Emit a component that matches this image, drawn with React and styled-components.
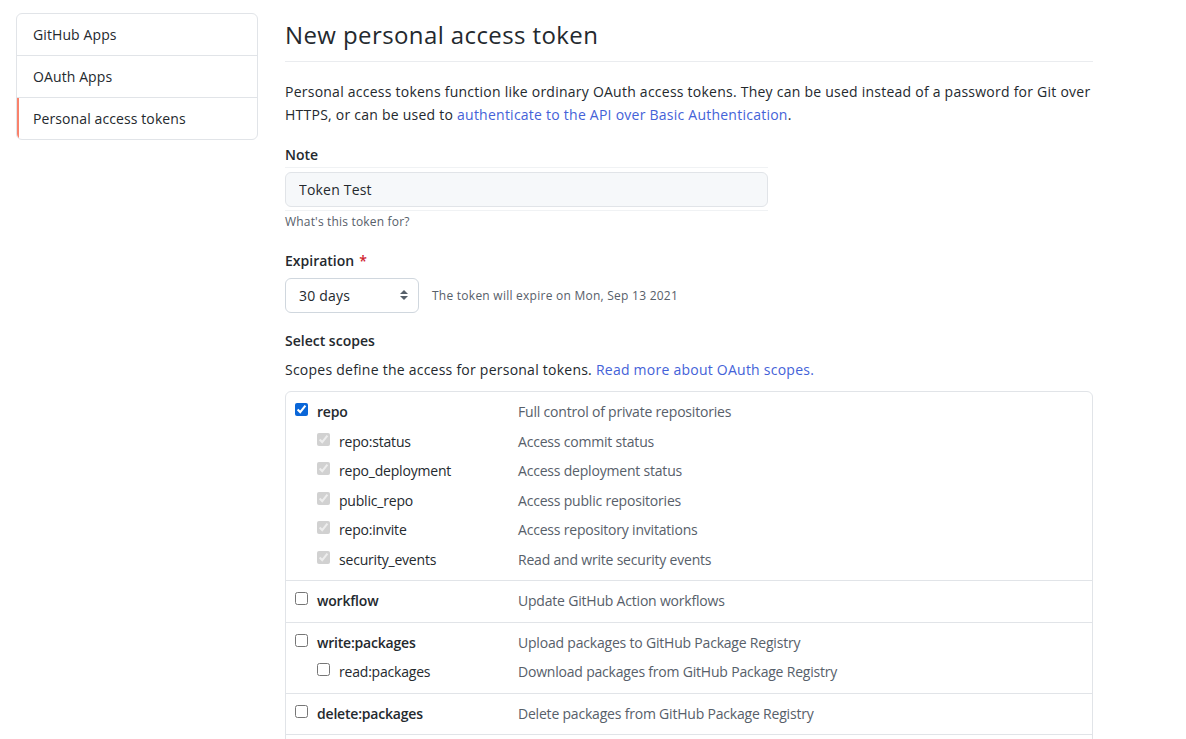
import React from "react";
import styled, { createGlobalStyle } from "styled-components";

const GlobalStyle = createGlobalStyle`
  body {
    margin: 0;
    background: #ffffff;
    color: #24292e;
    font-family: "Open Sans", "Noto Sans", "Liberation Sans", sans-serif;
    font-size: 14px;
  }
`;

const Layout = styled.div`
  display: flex;
  align-items: flex-start;
  gap: 27px;
  padding: 13px 0 0 16px;
`;

// Left settings menu
const SideMenu = styled.nav`
  width: 240px;
  border: 1px solid #e1e4e8;
  border-radius: 6px;
  overflow: hidden;
`;

const MenuItem = styled.a`
  display: block;
  padding: 0 16px;
  height: 41px;
  line-height: 41px;
  color: #24292e;
  text-decoration: none;
  font-size: 14px;
  letter-spacing: 0.1px;
  border-top: ${(p) => (p.$first ? "none" : "1px solid #e1e4e8")};
  box-shadow: ${(p) => (p.$active ? "inset 2px 0 0 #f9826c" : "none")};
`;

const Main = styled.main`
  width: 808px;
`;

const Title = styled.h2`
  margin: 0 0 18px;
  padding: 4px 0 8px;
  font-size: 24px;
  font-weight: 400;
  line-height: 36px;
  letter-spacing: 0.4px;
  border-bottom: 1px solid #eaecef;
`;

const Lead = styled.p`
  margin: 0 0 18px;
  line-height: 23px;
  letter-spacing: 0.24px;
`;

const Link = styled.a`
  color: #4462d8;
  text-decoration: none;
`;

const FormGroup = styled.div`
  margin-bottom: ${(p) => p.$mb || "15px"};
`;

const Label = styled.label`
  display: block;
  font-weight: 600;
  line-height: 22px;
  margin-bottom: ${(p) => p.$mb || "6px"};
`;

const Required = styled.span`
  color: #cf222e;
  margin-left: 5px;
`;

const InputFrame = styled.div`
  width: 483px;
  border-top: 1px solid #f0f2f4;
  border-bottom: 1px solid #f0f2f4;
  padding: 4px 0 3px;
`;

const TextInput = styled.input`
  box-sizing: border-box;
  width: 483px;
  height: 35px;
  padding: 0 13px;
  font: inherit;
  font-size: 14px;
  letter-spacing: 0.2px;
  color: #24292e;
  background: #f6f8fa;
  border: 1px solid #e1e4e8;
  border-radius: 6px;
  outline: none;
`;

const Note = styled.p`
  margin: 2px 0 0;
  font-size: 12px;
  letter-spacing: 0.18px;
  color: #57606a;
`;

const InlineRow = styled.div`
  display: flex;
  align-items: center;
  gap: 13px;
`;

const SelectWrap = styled.div`
  position: relative;
  width: 134px;
`;

const Select = styled.select`
  appearance: none;
  box-sizing: border-box;
  width: 134px;
  height: 35px;
  padding: 0 13px;
  font: inherit;
  font-size: 14px;
  letter-spacing: 0.2px;
  color: #24292e;
  background: #ffffff;
  border: 1px solid #d0d7de;
  border-radius: 6px;
`;

const Caret = styled.svg`
  position: absolute;
  right: 9px;
  top: 10px;
  pointer-events: none;
`;

const Hint = styled.span`
  font-size: 12px;
  letter-spacing: 0.25px;
  color: #57606a;
`;

const ScopeDesc = styled.p`
  margin: 8px 0 12px;
  letter-spacing: 0.24px;
`;

const ScopeTable = styled.div`
  border: 1px solid #e1e4e8;
  border-radius: 6px;
`;

const ScopeGroup = styled.div`
  padding: 5px 8px 6px;
  border-top: ${(p) => (p.$first ? "none" : "1px solid #e1e4e8")};
`;

const ScopeRow = styled.div`
  display: flex;
  align-items: center;
  height: 29.5px;
  overflow: hidden;
  letter-spacing: -0.2px;
`;

const ScopeName = styled.label`
  display: flex;
  align-items: center;
  flex: none;
  width: ${(p) => (p.$child ? "202px" : "224px")};
  padding-left: ${(p) => (p.$child ? "22px" : "0")};
  font-weight: ${(p) => (p.$child ? 400 : 600)};
  color: #24292e;
`;

const Check = styled.input`
  width: 13px;
  height: 13px;
  margin: 0 9px 4px 1px;
  accent-color: #0a66d8;
`;

const ScopeText = styled.span`
  color: #57606a;
`;

const groups = [
  {
    name: "repo",
    desc: "Full control of private repositories",
    checked: true,
    children: [
      ["repo:status", "Access commit status"],
      ["repo_deployment", "Access deployment status"],
      ["public_repo", "Access public repositories"],
      ["repo:invite", "Access repository invitations"],
      ["security_events", "Read and write security events"],
    ],
  },
  { name: "workflow", desc: "Update GitHub Action workflows", children: [] },
  {
    name: "write:packages",
    desc: "Upload packages to GitHub Package Registry",
    children: [["read:packages", "Download packages from GitHub Package Registry"]],
  },
  { name: "delete:packages", desc: "Delete packages from GitHub Package Registry", children: [] },
  { name: "admin:org", desc: "Full control of orgs and teams, read and write org projects", children: [] },
];

const App = () => (
  <>
    <GlobalStyle />
    <Layout>
      <SideMenu>
        <MenuItem $first href="#">GitHub Apps</MenuItem>
        <MenuItem href="#">OAuth Apps</MenuItem>
        <MenuItem $active href="#">Personal access tokens</MenuItem>
      </SideMenu>

      <Main>
        <Title>New personal access token</Title>
        <Lead>
          Personal access tokens function like ordinary OAuth access tokens. They can be used
          instead of a password for Git over HTTPS, or can be used to{" "}
          <Link href="#">authenticate to the API over Basic Authentication</Link>.
        </Lead>

        <FormGroup $mb="20px">
          <Label $mb="1px">Note</Label>
          <InputFrame>
            <TextInput defaultValue="Token Test" />
          </InputFrame>
          <Note>What's this token for?</Note>
        </FormGroup>

        <FormGroup $mb="17px">
          <Label>
            Expiration<Required>*</Required>
          </Label>
          <InlineRow>
            <SelectWrap>
              <Select defaultValue="30">
                <option value="7">7 days</option>
                <option value="30">30 days</option>
                <option value="60">60 days</option>
                <option value="90">90 days</option>
              </Select>
              <Caret width="12" height="14" viewBox="0 0 12 14">
                <path d="M2 6 L6 2 L10 6 Z M2 8 L6 12 L10 8 Z" fill="#57606a" />
              </Caret>
            </SelectWrap>
            <Hint>The token will expire on Mon, Sep 13 2021</Hint>
          </InlineRow>
        </FormGroup>

        <FormGroup>
          <Label $mb="0">Select scopes</Label>
          <ScopeDesc>
            Scopes define the access for personal tokens.{" "}
            <Link href="#">Read more about OAuth scopes.</Link>
          </ScopeDesc>
          <ScopeTable>
            {groups.map((g, i) => (
              <ScopeGroup key={g.name} $first={i === 0}>
                <ScopeRow>
                  <ScopeName>
                    <Check type="checkbox" defaultChecked={!!g.checked} />
                    {g.name}
                  </ScopeName>
                  <ScopeText>{g.desc}</ScopeText>
                </ScopeRow>
                {g.children.map(([name, desc]) => (
                  <ScopeRow key={name}>
                    <ScopeName $child>
                      <Check
                        type="checkbox"
                        defaultChecked={!!g.checked}
                        disabled={!!g.checked}
                      />
                      {name}
                    </ScopeName>
                    <ScopeText>{desc}</ScopeText>
                  </ScopeRow>
                ))}
              </ScopeGroup>
            ))}
          </ScopeTable>
        </FormGroup>
      </Main>
    </Layout>
  </>
);

export default App;
